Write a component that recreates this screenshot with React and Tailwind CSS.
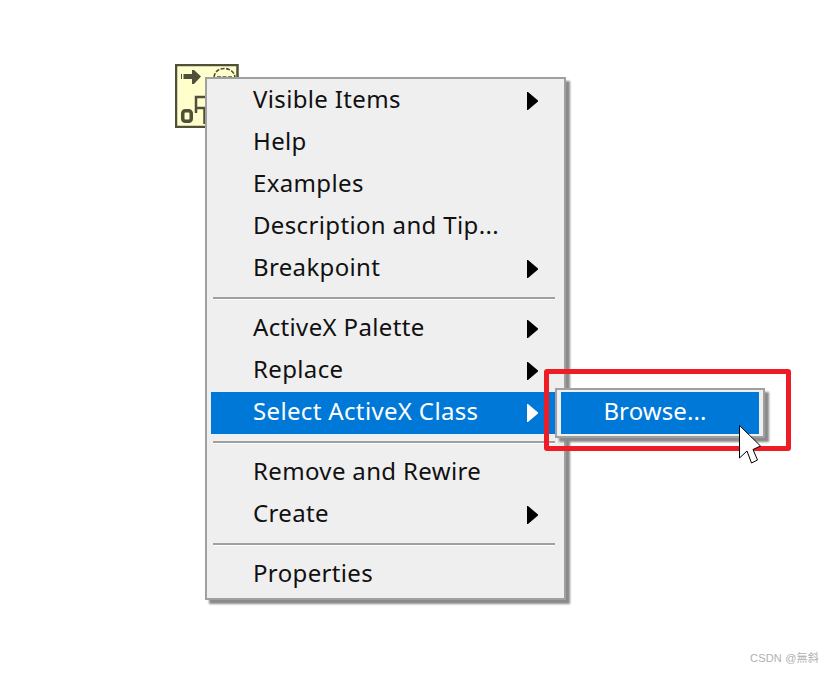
const font = { fontFamily: '"Noto Sans", "Open Sans", sans-serif' };

function Arrow({ white }) {
  return (
    <svg width="11" height="18" viewBox="0 0 11 18" className="shrink-0">
      <path d="M0 0 L1 0 L11 8.5 L11 9.5 L1 18 L0 18 Z" fill={white ? "#ffffff" : "#000000"} />
    </svg>
  );
}

function Item({ label, arrow, active }) {
  return (
    <div className={"flex items-center justify-between h-[42px] pl-[42px] pr-[22px] text-[24px] tracking-[0.35px] whitespace-nowrap " + (active ? "bg-[#0078d7] text-white" : "text-[#111111]")}>
      <span className="leading-[38px] -mt-[4px]">{label}</span>
      {arrow && <Arrow white={active} />}
    </div>
  );
}

function Sep() {
  return (
    <div className="pt-[7px] pb-[8px] pl-[2px] pr-[5px]">
      <div className="h-[3px] bg-white border-t-2 border-[#a0a0a0]" />
    </div>
  );
}

function Node() {
  return (
    <svg width="64" height="64" viewBox="0 0 64 64" className="absolute left-[175px] top-[64px]">
      <rect x="1" y="1" width="61.5" height="62" fill="#ffffcc" stroke="#4f4f3a" strokeWidth="2.5" />
      <path d="M6 10 H7 V15 H6 Z M8.5 10 H17 V6 H19 L26 12.5 L19 20 H17 V15 H8.5 Z" fill="#4f4f3a" />
      <path d="M39 13 C40 7 44 4.5 49 4.5 C54 4.5 59 7 60 13 M42 13 H58" fill="none" stroke="#4f4f3a" strokeWidth="1.6" strokeDasharray="4 1.5" />
      <rect x="7.75" y="46.75" width="8.5" height="10.5" rx="2.5" fill="none" stroke="#4f4f3a" strokeWidth="3.5" />
      <path d="M21 49 V33 H42 M21 44 H29.5 V60" fill="none" stroke="#4f4f3a" strokeWidth="2.5" />
    </svg>
  );
}

export default function App() {
  return (
    <div className="relative w-[834px] h-[673px] bg-white overflow-hidden" style={font}>
      <Node />

      <div className="absolute left-[205px] top-[77px] w-[361px] h-[523px] flex flex-col border-2 border-[#a0a0a0] bg-[#efefef] shadow-[4px_4px_2px_#8a8a8a] pl-[4px] pr-[4px] pt-[1px]">
        <Item label="Visible Items" arrow />
        <Item label="Help" />
        <Item label="Examples" />
        <Item label="Description and Tip..." />
        <Item label="Breakpoint" arrow />
        <Sep />
        <Item label="ActiveX Palette" arrow />
        <Item label="Replace" arrow />
        <Item label="Select ActiveX Class" arrow active />
        <Sep />
        <Item label="Remove and Rewire" />
        <Item label="Create" arrow />
        <Sep />
        <Item label="Properties" />
      </div>

      <div className="absolute left-[555px] top-[388px] w-[210px] h-[50px] flex border-2 border-[#a0a0a0] bg-[#efefef] shadow-[4px_4px_2px_#8a8a8a] pl-[4px] pr-[4px] py-[2px]">
        <div className="flex-1 bg-[#0078d7] text-white text-[24px] tracking-[0.1px] leading-[38px] text-center pr-[10px]">Browse...</div>
      </div>

      <div className="absolute left-[544px] top-[369px] w-[247px] h-[82px] border-[5px] border-[#ee1c25] rounded-[3px]" />

      <svg width="24" height="40" viewBox="0 0 24 40" className="absolute left-[739px] top-[425px]">
        <path d="M0.5 0.5 V33 L8 26 L12.5 38 L18.5 35 L14 24.5 L21.5 21 Z" fill="#ffffff" stroke="#000000" strokeWidth="1" />
      </svg>

      <div className="absolute right-[15px] top-[650px] text-[11px] leading-[16px] tracking-[0.2px] text-[#b0b0b0]" style={{ fontFamily: '"Liberation Sans", "Noto Sans CJK TC", sans-serif' }}>CSDN @無斜</div>
    </div>
  );
}
